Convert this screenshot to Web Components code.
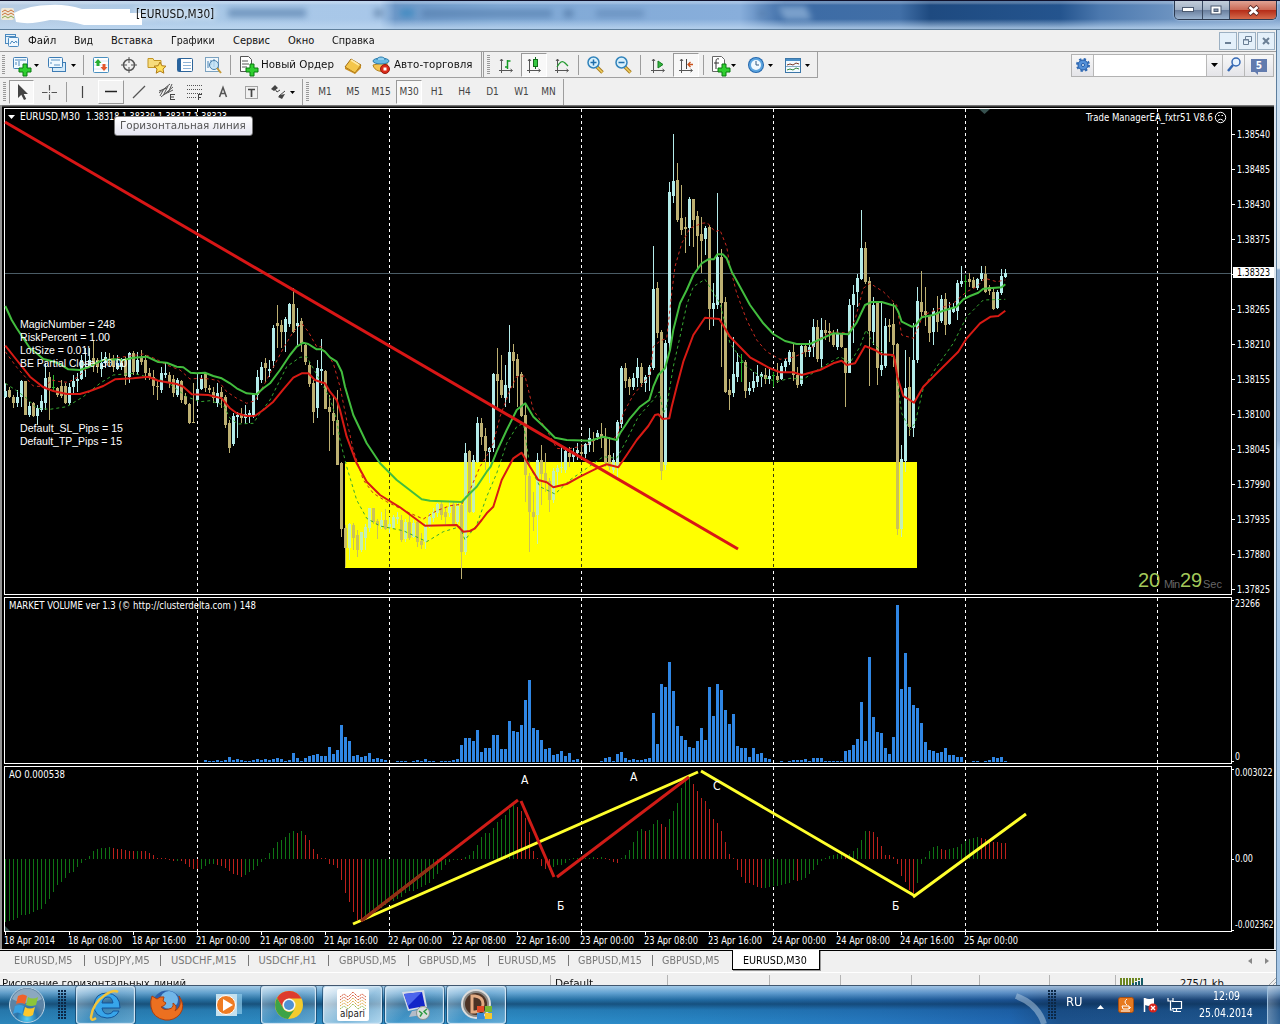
<!DOCTYPE html>
<html lang="ru">
<head>
<meta charset="utf-8">
<title>EURUSD,M30</title>
<style>
  body {
    margin: 0;
    width: 1280px;
    height: 1024px;
    overflow: hidden;
    background: #f0f0f0;
    font-family: "DejaVu Sans Condensed", "DejaVu Sans", sans-serif;
    font-size: 11px;
    color: #111;
  }
</style>
</head>
<body>
<trade-terminal>
  <title-bar slot="title">[EURUSD,M30]</title-bar>
  <menu-bar slot="menu"></menu-bar>
  <main-toolbar slot="tools"></main-toolbar>
  <line-toolbar slot="tools"></line-toolbar>
  <price-chart slot="chart"></price-chart>
  <chart-tabs slot="tabs"></chart-tabs>
  <status-line slot="status"></status-line>
</trade-terminal>
<task-bar></task-bar>

<script>
// Text squeezed or stretched to an exact width
class FitLabel extends HTMLElement {
  constructor() {
    super();
    this.attachShadow({ mode: 'open' });
  }

  connectedCallback() {
    const w = Number(this.getAttribute('w'));
    const size = this.getAttribute('size') || 11;
    this.shadowRoot.innerHTML = `
      <style>
        :host { display: inline-block; width: ${w}px; white-space: nowrap; font-size: ${size}px; flex: none; }
        span { display: inline-block; transform-origin: 0 50%; }
      </style>
      <span><slot></slot></span>
    `;
    const span = this.shadowRoot.querySelector('span');
    const real = span.offsetWidth;
    if (real) span.style.transform = `scaleX(${w / real})`;
  }
}

// Icons, each drawn in a 24x24 box
const axes = '<path d="M7.500 6v14M5 17.500h13M6 8l1.500-2 1.500 2M16.500 16l2 1.500-2 1.500" fill="none" stroke="#555"/>';
const plus = '<path d="M14 11h4v4h4v4h-4v4h-4v-4h-4v-4h4z" fill="#2fcf2f" stroke="#087a10"/>';
const ICONS = {
  newChart: `<rect x="4.500" y="4.500" width="14" height="11" rx="1" fill="#f2faff" stroke="#4480b5"/><path d="M6 7h11M7 12v-3M10 13v-5" stroke="#4b86bb"/>${plus}`,
  profiles: '<rect x="7.500" y="9.500" width="13" height="9" fill="#d5ebfa" stroke="#3d7cb4"/><rect x="3.500" y="4.500" width="14" height="10" rx="1" fill="#eef8ff" stroke="#3d7cb4"/><path d="M6 7h9M6 11v-2M9 12h6" stroke="#5b92c2"/>',
  market: '<rect x="4.500" y="4.500" width="15" height="15" rx="1" fill="#fff" stroke="#4a90c0"/><path d="M5 8h14M5 12h14M5 16h14" stroke="#d8e8f2"/><path d="M9 6l3.500 4h-2v3h-3v-3h-2z" fill="#26ae31"/><path d="M15 18l3.500-4h-2v-3h-3v3h-2z" fill="#e4572b"/>',
  cross: '<circle cx="12" cy="12" r="5.500" fill="none" stroke="#555" stroke-width="1.500"/><path d="M12 4v6M12 14v6M4 12h6M14 12h6" stroke="#555"/>',
  navigator: '<path d="M3 5.500h5l1 2h7v7H3z" fill="#f7dc7c" stroke="#c29525"/><path d="M15 9l1.800 3.700 4.200.5-3 2.800.8 4.200L15 18l-3.800 2.200.8-4.200-3-2.800 4.200-.5z" fill="#ffe05c" stroke="#b07b16"/>',
  terminal: '<rect x="4.500" y="5.500" width="15" height="13" rx="1" fill="#fff" stroke="#2d6499"/><path d="M5 6h3v12H5z" fill="#27639f"/><path d="M10 9.500h8M10 12.500h8M10 15.500h8" stroke="#8fb4d6"/>',
  tester: '<rect x="4.500" y="4.500" width="13" height="14" fill="#f2f8fc" stroke="#7ba2c0"/><path d="M7 15V8M10 12V7M13 14V6" stroke="#4582b7"/><circle cx="13" cy="12" r="4.500" fill="#bde0f4" fill-opacity=".8" stroke="#487fa9"/><path d="M16 15l4 5" stroke="#c79a35" stroke-width="2"/>',
  order: `<path d="M4.500 3.500h8l3 3v12h-11z" fill="#fff" stroke="#555"/><path d="M6 8h6M6 11h7M6 14h5" stroke="#555"/>${plus}`,
  book: '<path d="M4 14l6-8 10 6-6 8z" fill="#f4c64b" stroke="#9f6c12"/><path d="M4 14l10 6 6-8v3l-6 6L4 16z" fill="#c98d1c"/><path d="M10 7l8 5" stroke="#ffe9a2" stroke-width="2"/>',
  expert: '<path d="M4 12c1 6 10 9 14 3V9z" fill="#f5c451" stroke="#b1821e"/><ellipse cx="12" cy="8" rx="8" ry="3" fill="#67b9e3" stroke="#2c7cad"/><path d="M8 7c0-4 8-4 8 0" fill="#8fd0f0" stroke="#2c7cad"/><circle cx="16" cy="16" r="4.500" fill="#dc2c1b" stroke="#951b10"/><rect x="14.500" y="14.500" width="3" height="3" fill="#fff"/>',
  bars: axes + '<path d="M13.500 7v9M13.500 8h3M11 14h2.500" stroke="#149a24" stroke-width="1.500" fill="none"/>',
  candles: axes + '<path d="M13.500 4v12" stroke="#126d1b"/><rect x="11.500" y="6.500" width="4" height="7" fill="#35c841" stroke="#126d1b"/>',
  line: axes + '<path d="M7 14c3-5 5-7 8-4l3 3" fill="none" stroke="#249a31" stroke-width="1.300"/>',
  zoomIn: '<path d="M14 14l5.500 5.500" stroke="#a87d1e" stroke-width="3.500"/><path d="M14 14l5.500 5.500" stroke="#f1d061" stroke-width="1.500"/><circle cx="10.500" cy="9.500" r="5.500" fill="#d8f0fc" stroke="#3183bb" stroke-width="1.500"/><path d="M7.500 9.500h6M10.500 6.500v6" stroke="#1e6eab" stroke-width="1.500"/>',
  zoomOut: '<path d="M14 14l5.500 5.500" stroke="#a87d1e" stroke-width="3.500"/><path d="M14 14l5.500 5.500" stroke="#f1d061" stroke-width="1.500"/><circle cx="10.500" cy="9.500" r="5.500" fill="#d8f0fc" stroke="#3183bb" stroke-width="1.500"/><path d="M7.500 9.500h6" stroke="#1e6eab" stroke-width="1.500"/>',
  scroll: axes + '<path d="M12 8l5 3.500-5 3.500z" fill="#35b540" stroke="#147c1f"/>',
  shift: axes + '<path d="M12.500 6v10" stroke="#444"/><path d="M19 11.500h-5M16.500 9l-2.500 2.500 2.500 2.500" stroke="#c9521c" fill="none" stroke-width="1.300"/>',
  indicator: `<path d="M4.500 3.500h9l3 3v12h-12z" fill="#fff" stroke="#666"/><path d="M11 6c-3-1-3 1-3 4v6M6 10h5" fill="none" stroke="#333"/>${plus}`,
  clock: '<circle cx="12" cy="12" r="8" fill="#2367ae"/><circle cx="12" cy="12" r="7" fill="#5ca4df"/><circle cx="12" cy="12" r="5" fill="#f1f9ff"/><path d="M12 8v4h3" fill="none" stroke="#355b80"/>',
  template: '<rect x="4.500" y="5.500" width="15" height="14" fill="#f2faff" stroke="#3b76a8"/><path d="M5 6h14v2H5z" fill="#4a8fc7"/><path d="M6 12l3-1 3 1 3-2 3 1" fill="none" stroke="#7b3a28"/><path d="M6 17l3-1 3 1 3-2 3 1" fill="none" stroke="#31873b"/><path d="M5 13.500h14" stroke="#89aac4"/>',
  cursor: '<path d="M8 4v14l3.300-3.200L14 20l2.200-1-2.500-5H18z" fill="#444"/>',
  plus: '<path d="M12.500 5v5.500M12.500 14.500v5.500M5 12.500h5.500M14.500 12.500h5.500M12 12.500h1" stroke="#555" stroke-width="1.200"/>',
  vline: '<path d="M11.500 6v12" stroke="#444" stroke-width="1.200"/>',
  hline: '<path d="M6 11.500h12" stroke="#222" stroke-width="1.500"/>',
  trend: '<path d="M6 18L18 6" stroke="#555" stroke-width="1.200"/>',
  channel: '<path d="M4 13L15 4M6 17L18 7M5 16l4-7M9 14l4-8M13 13l4-9M4 11l8-3M8 15l10-5" stroke="#555"/><path d="M15.500 14v6M16 14.500h4M16 17h3M16 19.500h4" stroke="#444"/>',
  fibo: '<path d="M4 5.500h15M4 9.500h15M4 13.500h15M4 17.500h9" stroke="#555" stroke-dasharray="1 1"/><path d="M15.500 14v6M15 14.500h4M15 17.500h3" stroke="#444"/>',
  letter: '<path d="M8.500 17L12 7.500 15.500 17M9.500 13.500h5" fill="none" stroke="#555" stroke-width="1.500"/>',
  label: '<rect x="6.500" y="6.500" width="12" height="12" fill="none" stroke="#555" stroke-dasharray="1 1"/><path d="M9 9.500h7M12.500 9v8" stroke="#444" stroke-width="1.700"/>',
  arrows: '<path d="M4 9l4-4 3 3-4 3zM13 15l5-1-3 5-4-2z" fill="#444"/><path d="M8 9l2 3 3-2M12 16l6-5" fill="none" stroke="#444"/>'
};

// One button of a toolbar: icon, optional caption in the slot, optional drop arrow
class ToolButton extends HTMLElement {
  constructor() {
    super();
    this.attachShadow({ mode: 'open' });
  }

  connectedCallback() {
    const w = this.getAttribute('w') || 28;
    const icon = this.getAttribute('icon');
    const drop = this.getAttribute('drop');
    this.shadowRoot.innerHTML = `
      <style>
        :host { display: flex; align-items: center; width: ${w}px; height: 24px; flex: none; position: relative; box-sizing: border-box; }
        :host([pressed])::before, :host([hover])::before {
          content: ""; position: absolute; inset: 0 1px; z-index: -1;
          background: #f8f8f8; border: 1px solid; border-color: #999 #fff #fff #999;
        }
        :host([hover])::before { background: #f2f2f2; border-color: #fff #999 #999 #fff; }
        svg { flex: none; display: block; }
        .icon { margin: 0 1px 0 2px; }
        .text { flex: 1; text-align: center; color: #444; font-size: 10px; }
        .drop { position: absolute; left: ${drop - 3}px; top: 11px; }
      </style>
      ${icon ? `<svg class="icon" width="24" height="24" viewBox="0 0 24 24">${ICONS[icon]}</svg><slot></slot>` : '<span class="text"><slot></slot></span>'}
      ${drop ? '<svg class="drop" width="6" height="3"><path d="M0 0h5L2.500 3z" fill="#000"/></svg>' : ''}
    `;
  }
}

class ToolMark extends HTMLElement {
  constructor() {
    super();
    this.attachShadow({ mode: 'open' }).innerHTML = `
      <style>
        :host { display: flex; justify-content: center; align-items: center; height: 26px; flex: none; }
        i { display: block; width: 1px; height: 20px; background: #9d9d9d; }
        :host([kind="grip"]) i { width: 3px; height: 20px; background: repeating-linear-gradient(#999 0 1px, #f0f0f0 1px 2px); }
        :host([kind="end"]) i { height: 26px; }
      </style>
      <i></i>
    `;
  }

  connectedCallback() {
    this.style.width = (this.getAttribute('w') || 7) + 'px';
  }
}

class MainToolbar extends HTMLElement {
  constructor() {
    super();
    this.attachShadow({ mode: 'open' });
    this.shadowRoot.innerHTML = `
      <style>
        :host { display: flex; height: 27px; box-sizing: border-box; border-top: 1px solid #9c9c9c; position: relative; z-index: 0; align-items: center; justify-content: space-between; padding-right: 2px; }
        .tools { display: flex; align-items: center; height: 26px; border-bottom: 1px solid #a0a0a0; box-sizing: border-box; border-right: 1px solid #a0a0a0; width: 818px; }
        .search { display: flex; height: 23px; border: 1px solid #b2b2b2; box-sizing: border-box; width: 203px; background: #efefef; }
        .cell { width: 21px; border-right: 1px solid #b8b8b8; display: flex; align-items: center; justify-content: center; background: linear-gradient(#f8f8f8, #e4e4e8); }
        .field { width: 112px; background: #fff; border-right: 1px solid #b8b8b8; }
        .cell:last-child { flex: 1; border: 0; }
        .count { background: #627bae; color: #fff; width: 16px; height: 13px; font-weight: bold; font-size: 10px; line-height: 13px; text-align: center; position: relative; }
        .count::after { content: ""; position: absolute; left: 3px; bottom: -3px; border-top: 4px solid #627bae; border-left: 4px solid transparent; }
      </style>
      <div class="tools">
        <tool-mark kind="grip" w="7"></tool-mark>
        <tool-button icon="newChart" w="36" drop="30"></tool-button>
        <tool-button icon="profiles" w="37" drop="31"></tool-button>
        <tool-mark></tool-mark>
        <tool-button icon="market"></tool-button>
        <tool-button icon="cross"></tool-button>
        <tool-button icon="navigator"></tool-button>
        <tool-button icon="terminal"></tool-button>
        <tool-button icon="tester"></tool-button>
        <tool-mark></tool-mark>
        <tool-button icon="order" w="105"><fit-label w="73">Новый Ордер</fit-label></tool-button>
        <tool-button icon="book"></tool-button>
        <tool-button icon="expert" w="114"><fit-label w="78">Авто-торговля</fit-label></tool-button>
        <tool-mark kind="end" w="1"></tool-mark>
        <tool-mark kind="end" w="3"></tool-mark>
        <tool-mark kind="grip" w="7"></tool-mark>
        <tool-button icon="bars"></tool-button>
        <tool-button icon="candles" pressed></tool-button>
        <tool-button icon="line"></tool-button>
        <tool-mark w="5"></tool-mark>
        <tool-button icon="zoomIn"></tool-button>
        <tool-button icon="zoomOut"></tool-button>
        <tool-mark></tool-mark>
        <tool-button icon="scroll"></tool-button>
        <tool-button icon="shift" pressed></tool-button>
        <tool-mark w="6"></tool-mark>
        <tool-button icon="indicator" w="36" drop="28"></tool-button>
        <tool-button icon="clock" w="37" drop="29"></tool-button>
        <tool-button icon="template" w="37" drop="29"></tool-button>
      </div>
      <div class="search">
        <div class="cell"><svg width="16" height="16" viewBox="-8 -8 16 16"><circle r="5" fill="#5390d8" stroke="#1e58a6"/><circle r="6" fill="none" stroke="#2f69b4" stroke-width="2" stroke-dasharray="2.350 2.360"/><circle r="1.500" fill="#e8f4ff" stroke="#1e58a6"/></svg></div>
        <div class="field"></div>
        <div class="cell" style="width:15px"><svg width="7" height="4"><path d="M0 0h7L3.500 4z"/></svg></div>
        <div class="cell"><svg width="16" height="16"><circle cx="10" cy="5" r="4" fill="#e8f4ff" stroke="#3568b3" stroke-width="1.500"/><path d="M7 8l-5 6" stroke="#3568b3" stroke-width="2.500"/></svg></div>
        <div class="cell"><div class="count">5</div></div>
      </div>
    `;
  }
}

class LineToolbar extends HTMLElement {
  constructor() {
    super();
    this.attachShadow({ mode: 'open' });
    const periods = [['M1', 28], ['M5', 28], ['M15', 28], ['M30', 28], ['H1', 28], ['H4', 27], ['D1', 29], ['W1', 29], ['MN', 25]];
    this.shadowRoot.innerHTML = `
      <style>
        :host { display: flex; height: 27px; position: relative; z-index: 0; align-items: center; }
      </style>
      <tool-mark kind="grip" w="8"></tool-mark>
      <tool-button icon="cursor" w="27" pressed></tool-button>
      <tool-button icon="plus"></tool-button>
      <tool-mark w="6"></tool-mark>
      <tool-button icon="vline"></tool-button>
      <tool-button icon="hline" hover></tool-button>
      <tool-button icon="trend"></tool-button>
      <tool-button icon="channel"></tool-button>
      <tool-button icon="fibo"></tool-button>
      <tool-button icon="letter"></tool-button>
      <tool-button icon="label"></tool-button>
      <tool-button icon="arrows" w="36" drop="28"></tool-button>
      <tool-mark kind="end" w="3"></tool-mark>
      <tool-mark kind="grip" w="7"></tool-mark>
      ${periods.map(([p, w]) => `<tool-button w="${w}" ${p === 'M30' ? 'pressed' : ''}>${p}</tool-button>`).join('')}
      <tool-mark kind="end" w="4"></tool-mark>
    `;
  }
}

class TitleBar extends HTMLElement {
  constructor() {
    super();
    this.attachShadow({ mode: 'open' }).innerHTML = `
      <style>
        :host {
          display: flex; position: relative; height: 30px; box-sizing: border-box; overflow: hidden;
          border-top: 1px solid #10102a; border-bottom: 1px solid #5f7f9c; align-items: flex-start;
          background:
            linear-gradient(rgba(255,255,255,.25) 0 2px, transparent 4px 18px, rgba(190,215,240,.75) 27px),
            linear-gradient(90deg, #b8cde3 0, #a9c8e6 190px, #a8c7e9 380px, #6d98c8 395px, #80a9d5 500px, #88aedb 740px, #3c6ba5 785px, #416fa7 900px, #1e4a80 930px, #24548e 1060px, #4b78ae 1100px, #6b92c0 1170px, #7fa2cc 100%);
          color: #101010;
        }
        .ghost { position: absolute; inset: 0; filter: blur(3px); opacity: .65; }
        .blot { display: block; flex: none; position: relative; }
        .name { padding-top: 6px; margin-left: -10px; position: relative; text-shadow: 0 0 6px #fff, 0 0 8px #fff; }
        .buttons { display: flex; margin-left: auto; margin-right: 3px; border: 1px solid #2b3a50; border-top: 0; border-radius: 0 0 5px 5px; overflow: hidden; position: relative; box-shadow: 0 0 2px #d8e8f8; }
        .buttons div { width: 27px; height: 18px; display: flex; align-items: center; justify-content: center; background: linear-gradient(#c3cedb, #a0afc4 48%, #687d9c 50%, #9cb4d0); border-right: 1px solid #3a4a62; }
        .buttons .close { width: 46px; border: 0; background: linear-gradient(#e0a394, #cb6a56 48%, #b42a16 50%, #d46b4c); }
      </style>
      <svg class="ghost" width="1280" height="28">
        <rect x="228" y="8" width="78" height="8" fill="#4f78a6"/>
        <rect x="374" y="8" width="9" height="8" fill="#54789f"/>
        <rect x="400" y="8" width="14" height="8" fill="#2d84be"/>
        <rect x="422" y="9" width="130" height="7" fill="#4f78a8"/>
        <rect x="564" y="9" width="9" height="7" fill="#456c9a"/>
        <rect x="596" y="9" width="48" height="7" fill="#5d85b4"/>
        <rect x="758" y="9" width="8" height="7" fill="#557cab"/>
        <path d="M778 5h28l6 14h-28z" fill="#9cbde0"/>
      </svg>
      <svg class="blot" width="146" height="28">
        <rect x="1" y="7" width="13" height="12" rx="2" fill="#efe8d8"/>
        <path d="M2 11l3-2 3 2 3-2 3 2M2 14l3-2 3 2 3-2 3 2" fill="none" stroke="#c9713c"/>
        <path d="M2 17l3-2 3 2 3-2 3 2" fill="none" stroke="#8aa74a"/>
        <path d="M14 12Q30 4 50 4q15-1 32 4h48v4h12v12H84q-18-5-34-5-20 5-34 2z" fill="#fff"/>
      </svg>
      <fit-label class="name" w="78" size="12"><slot></slot></fit-label>
      <div class="buttons">
        <div><svg width="13" height="6"><rect x=".5" y=".5" width="11" height="4" fill="#fff" stroke="#4c5a70"/></svg></div>
        <div style="width:26px"><svg width="12" height="11"><rect x="1" y="1" width="10" height="8" fill="#fff" stroke="#4c5a70"/><rect x="4" y="4" width="4" height="2.500" fill="#8595ae" stroke="#4c5a70"/></svg></div>
        <div class="close"><svg width="13" height="11"><path d="M2 1.500l9 8M11 1.500l-9 8" stroke="#5b2a26" stroke-width="4.500"/><path d="M2.500 2l8 7M10.500 2l-8 7" stroke="#fff" stroke-width="2.800"/></svg></div>
      </div>
    `;
  }
}

class MenuBar extends HTMLElement {
  constructor() {
    super();
    this.attachShadow({ mode: 'open' });
    const items = [['Файл', 28, 18], ['Вид', 19, 18], ['Вставка', 42, 18], ['Графики', 44, 18], ['Сервис', 37, 18], ['Окно', 26, 18], ['Справка', 43, 0]];
    this.shadowRoot.innerHTML = `
      <style>
        :host { display: flex; height: 21px; align-items: center; box-sizing: border-box; padding: 0 1px 0 5px; color: #111; }
        fit-label { margin-top: -1px; }
        .doc { width: 23px; }
        .mdi { display: flex; gap: 1px; margin-left: auto; }
        .mdi div { width: 18px; height: 18px; box-sizing: border-box; border: 1px solid #9cb0c2; background: #e4f0fa; display: flex; align-items: center; justify-content: center; }
      </style>
      <svg class="doc" width="23" height="16" viewBox="0 0 23 16"><rect x=".5" y="1.500" width="10" height="9" fill="#e6f3fc" stroke="#4c8abf"/><path d="M1 3.500h9" stroke="#4c8abf"/><rect x="3.500" y="4.500" width="10" height="9" rx="1" fill="#eff8ff" stroke="#4c8abf"/><path d="M5 11l2-3 2 2 2-2 1 2" fill="none" stroke="#4c8abf"/></svg>
      ${items.map(([t, w, gap]) => `<fit-label w="${w}" style="margin-right:${gap}px">${t}</fit-label>`).join('')}
      <div class="mdi">
        <div><svg width="8" height="8"><path d="M1 6h6" stroke="#6a7f95" stroke-width="2"/></svg></div>
        <div><svg width="9" height="9"><path d="M2.500 3V.500h6v5H6" fill="none" stroke="#6a7f95"/><path d="M.500 3.500h5v5h-5zM0 4h6" fill="none" stroke="#6a7f95"/></svg></div>
        <div><svg width="8" height="8"><path d="M1 1l6 6M7 1L1 7" stroke="#6a7f95" stroke-width="2"/></svg></div>
      </div>
    `;
  }
}

// Candles: direction, high, body top, body bottom, low. Values are thirds of a pixel below y0.
const CANDLES = [
  { y0: 280, from: 0, rows: `u308,332,350,355 d320,330,350,355 d345,350,370,385 u330,352,368,380 u300,303,352,380 d303,303,404,404
    u367,378,404,410 d365,370,407,412 u375,385,408,435 u345,363,390,396 u250,293,368,390 d275,292,325,420 g285,322,325,335
    d320,325,345,352 d300,318,347,355 d310,318,370,372 u310,320,370,375 u285,302,320,340 u280,298,302,335 u225,240,298,300
    u205,252,256,290 u205,240,258,260 d180,235,250,275 d235,240,262,280 u215,250,268,290 u215,232,250,265 d220,245,250,262
    d225,240,262,275 u225,248,268,270 u235,248,262,270 d230,240,288,315 u215,220,290,310 d212,220,275,285 u215,240,275,285
    d210,235,245,255 d225,240,280,300 d265,280,290,300 d270,290,318,345 d300,318,322,360 u260,278,330,340 u245,280,285,295
    d275,285,310,325 d285,298,340,350 u295,300,345,350 d300,303,360,370 d340,348,372,375 d370,372,428,432 d310,425,430,430
    u280,328,360,370 u285,298,328,330 d275,280,325,335 d315,325,330,340 d320,335,355,370 u310,340,370,380 d320,335,350,385
    d345,350,435,445 d420,428,505,520 u400,408,492,497 u395,405,410,475 d385,405,415,430 u375,402,415,432 u390,400,405,430
    u340,345,405,415 u270,290,345,360 u245,262,300,310 d235,248,265,305 u240,268,272,290 u135,143,242,265 d75,130,137,205
    d120,135,157,205 u110,117,155,215 u70,72,132,140 d25,72,155,160 u85,128,138,195 d115,122,190,215 d190,195,245,255
    d245,255,312,320 d300,308,395,430 u240,263,385,415` },
  { y0: 320, from: 79, rows: `u57,148,153,195 d150,152,268,268 d225,262,275,392 d230,278,302,345 d210,300,435,435 d425,430,627,650
    d615,625,685,742 u610,612,685,720 d610,615,655,690 d630,645,690,712 u635,637,690,695 u612,620,655,690 u563,565,625,635
    d563,565,605,612 d598,603,615,658 u575,600,622,628 d568,600,628,630 u590,612,620,640 u585,590,625,628 u575,590,597,612
    d585,600,660,665 u598,605,658,665 d580,605,655,660 u600,610,650,655 d600,605,665,680 d640,662,675,688 u610,615,665,688
    u580,590,620,625 u565,575,595,605 u548,552,580,590 d545,553,585,600 d560,575,590,612 u540,560,578,590 d545,553,612,618
    u550,558,605,612 d550,555,695,777 u370,400,695,705 d390,393,575,580 u405,420,575,578 u290,310,425,430 d295,310,350,375
    d325,348,393,450 u380,383,395,490 u160,163,385,395 d85,162,182,265 d105,180,225,235 u135,195,235,262 u15,97,203,248
    d72,97,122,205 d102,117,167,260 d155,163,287,290 d250,285,465,545 d460,468,575,695 d515,577,590,632 u398,420,585,672
    d375,420,462,555 d400,460,487,515 d475,482,540,577 u445,452,540,550 u435,445,455,495 u375,440,445,460 u380,393,450,460
    d380,400,410,440 u385,395,412,425 u370,390,400,420 d372,395,403,410 u368,372,403,415 u325,355,375,395 d335,360,363,395
    u330,340,350,360 d308,342,355,385 d325,350,430,440 d350,405,440,450 u400,420,450,460 u300,305,440,480 u138,143,312,325
    d128,145,182,205 d170,178,200,225 u160,175,200,210 u115,140,175,200 d130,142,190,200 u165,170,190,215 u135,140,165,212` },
  { y0: 120, from: 162, rows: `u378,507,745,750 d485,503,640,655 d630,636,1053,1080 u660,668,1035,1050 u185,215,668,700 u42,183,228,250
    d128,180,300,305 d195,295,330,345 d290,320,327,398 u232,237,325,378 d237,238,300,380 d273,288,347,445 d290,343,362,460
    u318,323,357,405 d315,320,567,630 u490,550,567,618 u220,410,555,567 d388,410,548,740 d532,545,815,820 d778,810,825,870
    u650,762,818,830 u700,725,770,785 g703,725,728,785 d720,725,812,835 u785,803,812,825 u755,782,805,815 u735,767,785,800
    u755,763,770,800 d745,765,778,792 u740,767,778,792 g755,765,768,800 d728,768,780,790 u730,738,777,780 u718,722,740,760
    u690,697,725,735 d672,697,765,782 d740,765,795,803 u672,677,793,797 d670,677,697,710 u660,680,697,712 u597,620,680,712
    d600,620,717,725 u595,630,717,740 d600,630,640,660 d608,633,640,665 d630,640,675,680 u628,640,680,690 d640,640,680,685
    d683,685,758,860 u537,555,758,758 u495,522,555,668 u462,475,517,560 u270,383,478,480 d365,383,485,493 d470,483,632,797
    u530,555,635,675 d545,550,745,795 u550,735,750,767 u595,617,738,745 d597,615,620,665 d550,612,675,740` },
  { y0: 200, from: 223, rows: `d428,432,987,1005 u735,777,987,1012 u450,565,783,815 d470,562,680,707 u370,480,683,710 u262,303,480,490
    d213,305,335,355 d262,332,345,378 d345,347,400,425 u325,333,395,435 d287,335,365,395 u285,297,362,370 d280,297,375,405
    u305,325,372,375 u310,325,335,340 u240,250,332,360 u198,243,253,260 g225,242,245,285 d220,237,245,262 d232,240,263,265
    u235,237,263,270 u198,218,237,242 d198,222,275,280 d255,262,272,285 d265,275,327,330 u270,275,325,328 u207,228,280,285
    u207,218,232,235` }
];

// Moving averages, in the same thirds with their own origin
const AVERAGES = {
  green: [
    [0, 280, '16,78 35,120 50,145 70,175 90,205 110,220 130,237 155,243 180,252 205,268 240,270 265,262 290,248 310,240 345,238 370,240 400,233 440,230 475,246 500,248 530,260 550,262 572,278 590,280 615,278 640,288 665,295 690,310 710,325 740,340 770,343 790,325 810,310 840,270 870,225 890,200 910,188 925,192 950,208'],
    [320, 320, '4,88 15,95 30,112 50,125 65,155 75,200 100,285 140,370 180,430 230,480 305,538 330,542 425,546 445,525 470,500 500,455 512,440 530,395 560,330 590,270 605,258 616,250 640,290 670,318 705,353 740,360 810,362 850,350 890,360 900,340 920,310'],
    [620, 120, '30,895 60,860 88,840 100,800 115,765 135,745 150,690 160,630 180,550 200,510 220,465 245,430 265,418 282,418 292,403 308,403 320,415 335,455 360,500 390,555 430,610 460,642 495,663 530,672 570,672 600,658 640,640 685,643 710,608 735,555 755,546 785,546 825,558 835,575 845,605 875,620'],
    [820, 200, '285,378 305,352 340,345 370,332 410,320 430,298 450,288 475,278 490,266 545,262 556,253']
  ],
  red: [
    [0, 280, '16,197 50,240 90,290 130,322 160,333 200,342 240,342 270,333 310,318 345,298 400,295 445,290 475,302 530,312 550,320 575,343 625,345 665,355 690,385 710,400 740,408 765,407 790,390 820,365 850,328 880,293 905,280 925,280 945,300'],
    [320, 320, '4,187 15,190 30,215 50,240 60,270 80,350 110,430 140,485 180,525 240,562 315,617 410,615 430,635 450,633 465,625 485,600 500,580 520,560 545,480 580,415 605,398 630,440 655,480 680,487 700,502 740,492 780,470 830,445 860,433 895,442 920,405 950,360 985,318'],
    [620, 120, '105,885 115,883 128,897 148,895 155,860 170,800 190,725 220,645 255,593 298,597 330,650 390,712 450,745 480,757 520,757 545,765 600,750 640,730 665,722 680,735 705,730 735,678 765,690 785,703 820,705'],
    [820, 200, '223,472 232,530 250,588 282,608 310,560 350,520 415,455 440,415 480,370 512,350 535,348 556,332']
  ],
  redDash: [
    [0, 280, '16,215 50,262 100,318 135,320 155,300 180,305 205,307 235,290 260,265 300,243 340,235 430,222 470,238 500,255 540,270 570,297 600,295 630,297 655,302 680,335 710,355 740,370 765,362 800,300 820,262 850,205 880,155 905,130 925,155 950,200'],
    [320, 320, '4,80 20,100 40,130 60,200 80,300 100,390 130,480 160,520 200,545 260,575 310,597 350,572 390,557 425,553 450,510 480,440 505,400 520,370 540,290 570,210 590,170 615,168 640,270 680,330 710,385 740,388 800,375 840,350 880,358 895,340'],
    [620, 120, '10,880 40,825 90,765 100,680 120,663 140,655 155,520 165,440 185,370 210,325 245,310 262,308 285,335 300,330 320,380 330,440 350,520 380,600 410,660 440,695 480,718 520,712 570,690 600,655 640,635 685,640 705,600 730,505 750,490 790,515 830,555 845,645 880,655'],
    [820, 200, '310,345 360,325 400,310 440,275 470,260 495,235 530,245 556,240']
  ],
  greenDash: [
    [0, 280, '16,310 50,332 80,355 110,385 150,388 200,380 250,350 300,310 340,285 400,280 440,290 500,305 560,350 600,365 630,362 670,375 690,415 715,432 760,430 780,400 810,360 860,260 900,232 920,230'],
    [320, 320, '30,235 50,300 60,360 80,440 110,540 140,595 180,618 250,632 320,665 370,635 420,620 435,660 470,615 500,530 530,460 560,370 590,320 610,310 630,440 660,500 705,522 750,480 800,445 850,410 890,415 920,360'],
    [620, 120, '55,890 100,840 118,815 130,880 140,860 160,740 180,650 200,555 220,500 255,478 275,510 300,550 330,670 380,740 420,768 470,785 510,775 550,778 600,745 660,710 690,728 720,680 738,630 760,670 790,700 825,712'],
    [820, 200, '232,540 245,640 270,690 285,670 310,565 350,500 400,430 440,350 490,300 556,298']
  ]
};

// Volume bar heights in pixels, by first bar index
const VOLUME = [
  [50, '2 1 1 2 1 2 5 2 3 2 1 1 2 3 2 3 2 3 4 3 1 2 9 4 1 4 6 7 8 6 6 15 8 12 37 25 21 6 7 5 6 9 3 4 3 2'],
  [98, '1 1 1 .5 1 2 1 3 1 1 .5 1 1 1 2 3 17 24 24 21 32 10 14 14 27 27 13 13 41 31 30 37 62 82 34 32 22 13 14 7 8 11 6 9 2 3'],
  [146, '.5 .5 .5 1 4 5 1 8 10 4 2 3 2 2 3 4 49 18 78 75 100 71 36 26 22 15 14 21 34 22 75 46 78 72 52 38 48 16 14 14 5 14 8 9 4 3'],
  [194, '1 .5 1 2 2 2 3 1 4 4 4 1 1 1 1 1 11 12 17 23 60 21 105 45 30 29 14 8 25 157 73 109 75 57 54 39 20 12 11 9 10 14 7 7 5 5'],
  [241, '.5 1 1 .5 1 2 5 4 5 1']
];

// Awesome oscillator, pixels above the zero line
const OSCILLATOR = `-63 -62 -61 -59 -56 -55.500 -55 -53 -51 -50 -45 -40 -33 -26 -23 -19 -14 -13 -8 -4 -1
  3 8 10 11 11.500 12 11 10.500 10.400 9 8.500 8.300 8.400 8.200 8 6 4 1 .5 .4 -1 -2 -1.500 -2 -5 -8 -9.500 -10
  -9.500 -7 -5 -4.900 -5.500 -7 -9 -12 -15 -16 -17.500 -16 -13 -11 -7 -3 1 6 11 17 19 22 26 28.500 26.500 28 24 19 10 5 1 .5 -5 -6 -9 -21 -34 -43 -53 -61 -62
  -61 -59 -55 -51 -49 -46 -43 -42 -40 -38 -34 -32 -31.500 -30 -28 -26 -24 -20 -15 -11 -6 -3 -1 -.6 -.8 2 4 8 14 22 26 26.200 31 37 40 44 50 54
  52 48 41 27 8 1.500 -7 -10 -11 -8 -6 -5.500 -4 -1 .5 1 1.100 1.200 1.500 1.600 1.400 2 1 -1 -2.500 -4 .3 4 9 17 28
  30 28 29 35 39 35 32 40 48 56 71 80 83 75 68 61 58 50 40 36 28 17 5 .5 -11 -18 -24 -24.200 -26 -28 -29 -28.500 -27.500 -27.400 -27 -26 -25 -24 -21 -22
  -21 -19 -15 -11 -6 -2 1 3 4 5 6 4 5 8 11 19 28 27.900 27 22 13 4 3.900 2 -5 -17 -23 -31 -34 -24 -5 2 8 12 13 10 9 10 11 12 15 18 20 21.500 22 21 20 18 17.500 17.400 16.500 16.400`;

class PriceChart extends HTMLElement {
  constructor() {
    super();
    this.attachShadow({ mode: 'open' });
    this.render();
  }

  _candles() {
    const color = { u: '#b4ecea', d: '#bdb072', g: '#27b52b' };
    let out = '';
    CANDLES.forEach(({ y0, from, rows }) => {
      rows.trim().split(/\s+/).forEach((row, i) => {
        const x = 5 + (from + i) * 4;
        const [high, top, bottom, low] = row.slice(1).split(',').map(v => Math.round(y0 + v / 3));
        const fill = color[row[0]];
        out += `<path d="M${x} ${high}h1v${Math.max(low - high, 1)}h-1zM${x - 1} ${top}h3v${Math.max(bottom - top, 1)}h-3z" fill="${fill}"/>`;
      });
    });
    return out;
  }

  _average(name) {
    return AVERAGES[name].map(([x0, y0, pts]) => pts.split(' ').map(p => {
      const [x, y] = p.split(',');
      return `${(x0 + x / 3).toFixed(1)},${(y0 + y / 3).toFixed(1)}`;
    }).join(' ')).join(' ');
  }

  _volume() {
    return VOLUME.map(([from, list]) => list.split(' ').map((h, i) =>
      `<rect x="${4 + (from + i) * 4}" y="${762 - h}" width="3" height="${h}"/>`).join('')).join('');
  }

  _oscillator() {
    let prev = -70;
    return OSCILLATOR.trim().split(/\s+/).map(Number).map((v, i) => {
      const fill = v > prev ? '#0f7414' : '#bd211c';
      prev = v;
      const h = Math.max(Math.abs(v), 1);
      return `<rect x="${5 + i * 4}" y="${v > 0 ? 859 - h : 859}" width="1" height="${h}" fill="${fill}"/>`;
    }).join('');
  }

  _text(x, y, text, w, size = 10) {
    return `<text x="${x}" y="${y}" font-size="${size}" textLength="${w}" lengthAdjust="spacingAndGlyphs">${text}</text>`;
  }

  render() {
    const days = [197, 389, 581, 773, 965, 1157];
    const prices = ['1.38540', '1.38485', '1.38430', '1.38375', '', '1.38265', '1.38210', '1.38155', '1.38100', '1.38045', '1.37990', '1.37935', '1.37880', '1.37825'];
    const times = ['18 Apr 2014', '18 Apr 08:00', '18 Apr 16:00'];
    [21, 22, 23, 24].forEach(d => times.push(`${d} Apr 00:00`, `${d} Apr 08:00`, `${d} Apr 16:00`));
    times.push('25 Apr 00:00');

    this.shadowRoot.innerHTML = `
      <style>
        :host { display: block; position: relative; height: 844px; background: #000; border-left: 2px solid #929292; border-right: 2px solid #dde5ee; box-sizing: border-box; width: 1276px; }
        svg { display: block; }
        text { fill: #fff; font-family: "DejaVu Sans Condensed", "DejaVu Sans", sans-serif; }
        .arial text { font-family: "Liberation Sans", Arial, sans-serif; }
        .tip { position: absolute; left: 112px; top: 11px; width: 139px; height: 20px; box-sizing: border-box; border: 1px solid #767676; border-radius: 3px; background: linear-gradient(#fff, #e5e5f1); color: #575757; padding: 2px 5px; }
      </style>
      <svg width="1272" height="844" viewBox="2 105 1272 844">
        <path d="M2 105h1272v1.500H2z" fill="#777"/>
        <g fill="none" stroke="#fff" shape-rendering="crispEdges">
          <path d="M4.500 594.500V108.500H1231.500V594.500ZM4.500 763.500V597.500H1231.500V763.500ZM4.500 931.500V766.500H1231.500V931.500Z"/>
          ${days.map(x => `<path d="M${x + .5} 109V594M${x + .5} 598V763M${x + .5} 767V931" stroke-dasharray="3 3"/>`).join('')}
          ${prices.map((p, i) => `<path d="M1232 ${134.5 + i * 35}h3"/>`).join('')}
          ${times.map((t, i) => `<path d="M${5.5 + i * 64} 932v3"/>`).join('')}
          <path d="M1232 600.500h2M1232 761.500h2M1232 769.500h2M1232 859.500h2M1232 930.500h2"/>
        </g>
        <path d="M979 109h11l-5.500 5z" fill="#37514f"/>
        <path d="M5 926v5h5z" fill="#37514f"/>
        <path d="M5 273.500H1231" stroke="#4a5c66" shape-rendering="crispEdges"/>
        <rect x="345" y="462" width="572" height="106" fill="#ff0"/>
        <g shape-rendering="crispEdges">
          ${days.slice(1, 4).map(x => `<path d="M${x + .5} 462V568" stroke="#000010" stroke-dasharray="3 3"/>`).join('')}
          ${this._candles()}
        </g>
        <rect x="345" y="462" width="572" height="106" fill="#ff0" opacity=".22"/>
        <g fill="none" stroke-linejoin="round">
          <polyline points="${this._average('redDash')}" stroke="#c92a20" stroke-dasharray="3 3"/>
          <polyline points="${this._average('greenDash')}" stroke="#36a832" stroke-dasharray="3 3"/>
          <polyline points="${this._average('green')}" stroke="#42bd3e" stroke-width="2"/>
          <polyline points="${this._average('red')}" stroke="#d81a14" stroke-width="2"/>
          <path d="M5 122L738 549" stroke="#d81616" stroke-width="3"/>
        </g>
        <path d="M8 115h7l-3.500 4z" fill="#fff"/>
        ${this._text(20, 120, 'EURUSD,M30', 60)}
        ${this._text(86, 120, '1.38318 1.38339 1.38317 1.38323', 141)}
        ${this._text(1086, 121, 'Trade ManagerEA_fxtr51 V8.6', 127)}
        <g fill="none" stroke="#fff"><circle cx="1220.500" cy="117.500" r="5.200"/><path d="M1217.500 121q3-3.500 6 0M1218 115.500h1.500M1221.500 115.500h1.500"/></g>
        <g class="arial">
          ${this._text(20, 328, 'MagicNumber = 248', 95, 11)}
          ${this._text(20, 341, 'RiskPercent = 1.00', 90, 11)}
          ${this._text(20, 354, 'LotSize = 0.01|', 70, 11)}
          ${this._text(20, 367, 'BE Partial Close: 30.00', 107, 11)}
          ${this._text(20, 432, 'Default_SL_Pips = 15', 103, 11)}
          ${this._text(20, 445, 'Default_TP_Pips = 15', 102, 11)}
          <text x="1138" y="587" font-size="20" style="fill:#a3c95a">20</text>
          <text x="1164" y="588" font-size="11" textLength="16" style="fill:#666">Min</text>
          <text x="1180" y="587" font-size="20" style="fill:#a3c95a">29</text>
          <text x="1203" y="588" font-size="11" style="fill:#666">Sec</text>
        </g>
        ${prices.map((p, i) => p ? this._text(1237, 138 + i * 35, p, 33) : '').join('')}
        <rect x="1233" y="267" width="41" height="11" fill="#fff"/>
        <text x="1237" y="276" font-size="10" textLength="33" lengthAdjust="spacingAndGlyphs" style="fill:#000">1.38323</text>

        ${this._text(9, 609, 'MARKET VOLUME ver 1.3 (© http://clusterdelta.com ) 148', 247)}
        ${this._text(1235, 607, '23266', 25)}
        ${this._text(1235, 760, '0', 5)}
        <g fill="#2f86e4" shape-rendering="crispEdges">${this._volume()}</g>

        ${this._text(9, 778, 'AO 0.000538', 56)}
        ${this._text(1235, 776, '0.003022', 37.5)}
        ${this._text(1235, 862, '0.00', 18)}
        ${this._text(1235, 928, '-0.002362', 38.5)}
        <g shape-rendering="crispEdges">${this._oscillator()}</g>
        <g fill="none" stroke-width="3">
          <path d="M353 924L698 772M701 771L915 896M913 897L1026 814" stroke="#ffff2c"/>
          <path d="M361 921L518 800M521 801L554 877M557 877L689 777" stroke="#d01c17"/>
          <path d="M361 921L435 864" stroke="#8f3014"/>
        </g>
        <text x="521" y="784" font-size="12">А</text>
        <text x="630" y="781" font-size="12">А</text>
        <text x="713" y="790" font-size="12">С</text>
        <text x="557" y="910" font-size="12">Б</text>
        <text x="892" y="910" font-size="12">Б</text>
        ${times.map((t, i) => this._text(4 + i * 64, 944, t, i ? 54 : 51)).join('')}
      </svg>
      <div class="tip"><fit-label w="126">Горизонтальная линия</fit-label></div>
    `;
  }
}

class ChartTabs extends HTMLElement {
  constructor() {
    super();
    this.attachShadow({ mode: 'open' });
    // caption, text width, cell width
    const tabs = [['EURUSD,M5', 59, 85], ['USDJPY,M5', 56, 76], ['USDCHF,M15', 65, 88], ['USDCHF,H1', 58, 80], ['GBPUSD,M5', 58, 80],
      ['GBPUSD,M5', 58, 80], ['EURUSD,M5', 59, 80], ['GBPUSD,M15', 64, 84], ['GBPUSD,M5', 58, 79]];
    this.shadowRoot.innerHTML = `
      <style>
        :host { display: flex; height: 24px; align-items: flex-start; box-sizing: border-box; border-top: 1px solid #e8e8e8; color: #777; background: #f0f0f0; border-bottom: 1px solid #fff; }
        .tab { display: flex; justify-content: center; align-items: center; height: 20px; box-sizing: border-box; position: relative; border-top: 1px solid #000; padding-right: 3px; }
        .tab::after { content: ""; position: absolute; right: 0; top: 4px; height: 11px; width: 1px; background: #777; }
        .tab.last::after { display: none; }
        .tab:first-of-type { padding-left: 5px; }
        .active { border: 1px solid #000; border-top: 0; background: #fff; color: #000; width: 88px; box-sizing: border-box; height: 20px; display: flex; align-items: center; justify-content: center; box-shadow: 1px 1px 0 #999; padding: 1px 2px 0 0; }
        .nav { flex: 1; height: 20px; display: flex; justify-content: flex-end; align-items: center; gap: 13px; padding-right: 7px; border-top: 1px solid #000; box-sizing: border-box; }
      </style>
      ${tabs.map(([t, w, cell], i) => `<div class="tab ${i === 8 ? 'last' : ''}" style="width:${cell}px"><fit-label w="${w}">${t}</fit-label></div>`).join('')}
      <div class="active"><fit-label w="64">EURUSD,M30</fit-label></div>
      <div class="nav">
        <svg width="4" height="6"><path d="M4 0v6L0 3z" fill="#888"/></svg>
        <svg width="4" height="6"><path d="M0 0v6l4-3z" fill="#888"/></svg>
      </div>
    `;
  }
}

class StatusLine extends HTMLElement {
  constructor() {
    super();
    this.attachShadow({ mode: 'open' }).innerHTML = `
      <style>
        :host { display: flex; height: 12px; overflow: hidden; background: #f0f0f0; color: #111; }
        div { flex: none; box-sizing: border-box; border-right: 1px solid #b4b4b4; padding: 2px 0 0 4px; height: 14px; margin-top: 2px; display: flex; align-items: flex-start; line-height: 13px; }
        div:last-child { border: 0; }
      </style>
      <div style="width:551px;padding-left:2px"><fit-label w="184">Рисование горизонтальных линий</fit-label></div>
      <div style="width:117px"><fit-label w="38">Default</fit-label></div>
      <div style="width:102px"></div>
      <div style="width:71px"></div>
      <div style="width:71px"></div>
      <div style="width:68px"></div>
      <div style="width:70px"></div>
      <div style="width:66px"></div>
      <div style="width:160px">
        <svg width="60" height="10"><path d="M1 1v9M4 1v9M7 1v9M10 1v9M13 1v5" stroke="#6c8720" stroke-width="2"/><path d="M13 6v4M16 5v5M19 4v6M22 1v9" stroke="#155c68" stroke-width="2"/><path d="M16 1v3M19 1v2" stroke="#6c8720" stroke-width="2"/></svg>
        <fit-label w="44">275/1 kb</fit-label>
        <svg width="9" height="9" style="margin-left:43px"><path d="M1 9l8-8M5 9l4-4" stroke="#aaa"/></svg>
      </div>
    `;
  }
}

class TradeTerminal extends HTMLElement {
  constructor() {
    super();
    this.attachShadow({ mode: 'open' }).innerHTML = `
      <style>
        :host { display: flex; flex-direction: column; height: 985px; }
        .body { display: flex; flex: 1; min-height: 0; }
        .client { width: 1276px; display: flex; flex-direction: column; background: #f0f0f0; }
        .frame { flex: 1; border-left: 1px solid #5c7d9c; background: linear-gradient(#c4dbf0 0, #dce8f3 180px, #dfe9f2 238px, #8fadd0 240px, #94b3d6 410px, #a9c9ea 420px, #a6c6e6 100%); }
      </style>
      <slot name="title"></slot>
      <div class="body">
        <div class="client">
          <slot name="menu"></slot>
          <slot name="tools"></slot>
          <slot name="chart"></slot>
          <slot name="tabs"></slot>
          <slot name="status"></slot>
        </div>
        <div class="frame"></div>
      </div>
    `;
  }
}

class TaskButton extends HTMLElement {
  constructor() {
    super();
    this.attachShadow({ mode: 'open' }).innerHTML = `
      <style>
        :host { display: flex; align-items: center; justify-content: center; width: 59px; height: 38px; box-sizing: border-box; flex: none; border-radius: 3px; }
        :host([open]) { border: 1px solid #cfe3f2; background: linear-gradient(135deg, rgba(255,255,255,.5), rgba(255,255,255,.1) 50%, rgba(255,255,255,.25)); box-shadow: inset 0 0 1px #fff, 0 0 0 1px rgba(10,40,70,.5); }
        :host([open="active"]) { background: linear-gradient(135deg, rgba(255,255,255,.85), rgba(200,225,240,.5) 60%, rgba(230,245,255,.7)); }
      </style>
      <slot></slot>
    `;
  }
}

class TaskBar extends HTMLElement {
  constructor() {
    super();
    this.attachShadow({ mode: 'open' }).innerHTML = `
      <style>
        :host {
          display: flex; position: relative; width: 1280px; height: 39px; box-sizing: border-box; border-top: 1px solid #41576f; align-items: center; color: #fff; overflow: hidden;
          background:
            linear-gradient(rgba(210,228,245,.72) 0, rgba(150,185,220,.5) 7px, rgba(20,45,80,.3) 14px, rgba(10,45,80,.6) 18px, rgba(20,80,130,.25) 24px, rgba(60,160,220,.1) 38px),
            linear-gradient(90deg, #2b83b7 0, #2e8fc8 500px, #2784c4 700px, #2474bc 880px, #1e62ae 1010px, #1a4a84 1060px, #1d4f86 1280px);
        }
        .start { width: 55px; display: flex; justify-content: center; padding-right: 2px; box-sizing: border-box; }
        .grip { width: 8px; height: 30px; background: radial-gradient(circle at 1px 1px, #0c2745 .8px, transparent 1px) 0 0 / 3px 3px; flex: none; }
        .beam { position: absolute; left: 1010px; top: 0; }
        .lang { width: 17px; margin: -6px 0 0 10px; }
        .clock { display: flex; flex-direction: column; align-items: center; gap: 2px; width: 56px; margin-left: 15px; line-height: 15px; }
        .desk { width: 12px; height: 38px; margin-left: auto; border-left: 1px solid #9fc0dd; background: linear-gradient(90deg, rgba(255,255,255,.3), rgba(255,255,255,.08)); }
        .tray { display: flex; align-items: center; height: 38px; position: relative; flex: 1; }
        svg { flex: none; }
      </style>
      <div class="start">
        <svg width="38" height="38" viewBox="-19 -19 38 38">
          <defs><radialGradient id="orb" cy=".9"><stop offset="0" stop-color="#53d0f5"/><stop offset=".6" stop-color="#2874ab"/><stop offset="1" stop-color="#5b83a5"/></radialGradient></defs>
          <circle r="17.500" fill="url(#orb)" stroke="#b9d3e4"/>
          <path d="M-15-6a16 16 0 0 1 30 0q-15 8-30 0" fill="#fff" opacity=".3"/>
          <path d="M-9-9q5-3 9 0l-2 8q-5-2-9 0z" fill="#f0622b"/><path d="M1-8q5 3 10 0L9 0Q4 2-1 0z" fill="#8dc63a"/>
          <path d="M-12 1q5-2 9 0l-2 8q-5-3-9 0z" fill="#38a0e0"/><path d="M-2 2q5 3 10 0l-2 8q-5 3-10 0z" fill="#fcc82c"/>
        </svg>
      </div>
      <div class="grip" style="margin-left:3px"></div>
      <task-button open style="margin-left:10px">
        <svg width="34" height="34" viewBox="-17 -17 34 34"><path d="M14 3H-4q1 6 6 6 4 0 5-3h6Q10 13 1 13-12 12-12 0-11-12 1-12 14-11 14 3zM-4-2H7q-1-6-5-6-5 0-6 6" fill="#37a5ea" stroke="#14559a"/><path d="M-10 13q-5 4-5-1 2-14 14-22 9-6 13-3" fill="none" stroke="#f2c43c" stroke-width="2.500"/></svg>
      </task-button>
      <task-button style="width:64px">
        <svg width="34" height="34" viewBox="-17 -17 34 34"><circle r="14.500" fill="#2b5ea9"/><circle cx="2" cy="-5" r="9" fill="#71b6e8"/><path d="M-15-9l5 3q3-3 7-2L-4-4l3 2q-1 3-5 4 3 4 8 2 5-1 4-6 5 3 2 8 8-5 4-15 7 10 1 18-6 7-15 6-12-2-14-13-1-6 1-11" fill="#ec7020" stroke="#a83f12"/></svg>
      </task-button>
      <task-button style="width:57px">
        <svg width="34" height="34" viewBox="-17 -17 34 34"><path d="M4-11h10v20H4z" fill="#8ecbea" opacity=".7"/><path d="M-12-11H9v22h-21z" fill="#c5e1ee"/><circle cx="-2" r="9.500" fill="#ef7c23" stroke="#fff"/><path d="M-5-6v12L5 0z" fill="#fff"/></svg>
      </task-button>
      <task-button open style="width:55px;margin-left:5px">
        <svg width="32" height="32" viewBox="-16 -16 32 32"><circle r="14" fill="#f3cb2d"/><path d="M-12-7A14 14 0 0 1 12.500-6.500H0A7 7 0 0 0-6 3z" fill="#dd3b2e"/><path d="M-12-7A14 14 0 0 0-1 14L6 4A7 7 0 0 1-6 3z" fill="#3da347"/><circle r="6.500" fill="#f5f7f6"/><circle r="5" fill="#4f91d3"/></svg>
      </task-button>
      <task-button open="active" style="margin-left:7px">
        <svg width="32" height="32"><rect width="32" height="32" rx="2" fill="#fff"/><path d="M3 8l4-3 4 3 5-5 5 5 4-3 4 3M3 11l4-3 4 3 5-5 5 5 4-3 4 3" fill="none" stroke="#d55433" stroke-dasharray="1.500 .7"/><path d="M3 14l4-3 4 3 5-5 5 5 4-3 4 3M3 17l4-3 4 3 5-5 5 5 4-3 4 3" fill="none" stroke="#dba23a" stroke-dasharray="1.500 .7"/><path d="M3 20l4-3 4 3 5-5 5 5 4-3 4 3" fill="none" stroke="#93b848" stroke-dasharray="1.500 .7"/><text x="3" y="28" font-size="10" textLength="25" lengthAdjust="spacingAndGlyphs" fill="#222">alpari</text></svg>
      </task-button>
      <task-button open style="margin-left:3px">
        <svg width="34" height="34"><path d="M4 4l22-2 3 17-19 4z" fill="#d5dce7"/><path d="M6 6l18-2 3 14-16 3z" fill="#1426c8"/><path d="M6 6l18-2-14 14z" fill="#4c66ec"/><path d="M14 23l7-1 3 5-13 2z" fill="#b4bcc8"/><circle cx="25" cy="25" r="6.500" fill="#d9dddb" stroke="#8b918f"/><path d="M21 23l3 2.500-2 3M29 21l-3 2.500 3 3" fill="none" stroke="#2f9a43" stroke-width="1.500"/></svg>
      </task-button>
      <task-button open style="margin-left:3px">
        <svg width="34" height="34"><circle cx="16" cy="16" r="14" fill="#8a8783" stroke="#dcdcdc" stroke-width="2"/><circle cx="16" cy="16" r="11" fill="#4c3326"/><path d="M12 8v16h3q8-1 8-8t-8-8z" fill="none" stroke="#e2ab83" stroke-width="3"/><path d="M17 18h7v6h-7z" fill="#e44b27"/><path d="M25 18h7v6h-7z" fill="#77b834"/><path d="M17 25h7v6h-7z" fill="#3989d4"/><path d="M25 25h7v6h-7z" fill="#f6c72e"/></svg>
      </task-button>
      <svg class="beam" width="60" height="38"><path d="M6 10q22 8 28 28" fill="none" stroke="#b5cde2" stroke-width="6" opacity=".5"/></svg>
      <div class="tray">
        <div class="grip" style="margin-left:542px"></div>
        <div class="lang"><fit-label w="16" size="12">RU</fit-label></div>
        <svg width="8" height="4" style="margin:3px 0 0 14px"><path d="M0 4h7L3.500 0z" fill="#fff"/></svg>
        <svg width="16" height="16" style="margin-left:13px"><rect x=".5" y=".5" width="15" height="15" rx="2" fill="#e77a20" stroke="#a94f12"/><path d="M9 2q-4 3 0 6M4 9h7v3H5zM3 14h9M11 10q3 0 0 2" fill="none" stroke="#fff"/></svg>
        <svg width="16" height="16" style="margin-left:8px"><path d="M2.500 1v14" stroke="#fff" stroke-width="1.500"/><path d="M3 1q4 2 9 0v7q-4 2-9 0z" fill="#fff"/><circle cx="11" cy="11" r="4.500" fill="#d8231b"/><path d="M9 9l4 4M13 9l-4 4" stroke="#fff" stroke-width="1.300"/></svg>
        <svg width="16" height="16" style="margin-left:9px"><path d="M5 4.500h9.500v7H5M9.500 12v3M6 14.500h8M1 1v3h5V1M3.500 4v9H7" fill="none" stroke="#fff" stroke-width="1.200"/></svg>
        <div class="clock"><fit-label w="27" size="12">12:09</fit-label><fit-label w="54" size="12">25.04.2014</fit-label></div>
        <div class="desk"></div>
      </div>
    `;
  }
}

customElements.define('fit-label', FitLabel);
customElements.define('tool-button', ToolButton);
customElements.define('tool-mark', ToolMark);
customElements.define('task-button', TaskButton);
customElements.define('title-bar', TitleBar);
customElements.define('menu-bar', MenuBar);
customElements.define('main-toolbar', MainToolbar);
customElements.define('line-toolbar', LineToolbar);
customElements.define('price-chart', PriceChart);
customElements.define('chart-tabs', ChartTabs);
customElements.define('status-line', StatusLine);
customElements.define('trade-terminal', TradeTerminal);
customElements.define('task-bar', TaskBar);
</script>
</body>
</html>
